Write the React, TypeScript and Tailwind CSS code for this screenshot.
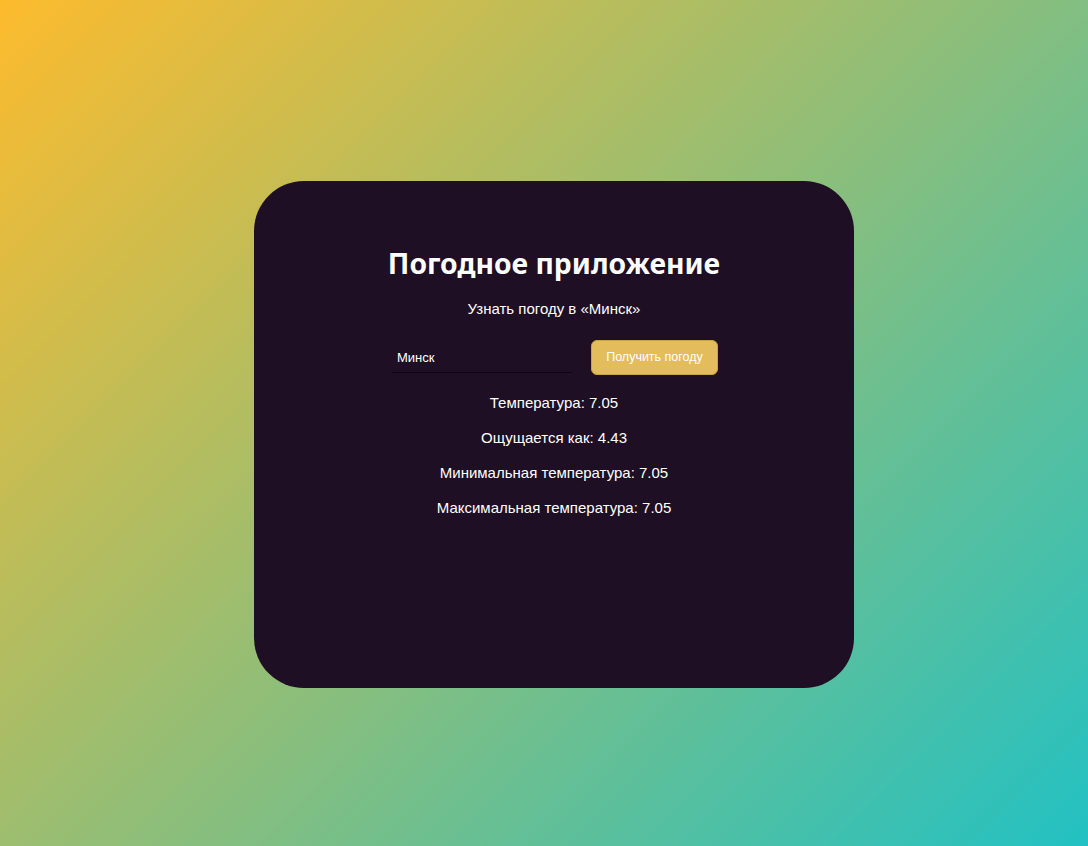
import React, { useState } from 'react';

const results = [
    { label: 'Температура', value: '7.05' },
    { label: 'Ощущается как', value: '4.43' },
    { label: 'Минимальная температура', value: '7.05' },
    { label: 'Максимальная температура', value: '7.05' },
];

export default function App() {
    const [city, setCity] = useState('Минск');

    return (
        <div className="flex min-h-screen w-full items-center justify-center bg-[linear-gradient(135deg,#fdbb2d_0%,#22c1c3_100%)] pl-[20px] pt-[23px] font-['Liberation_Sans',Arial,sans-serif]">
            <div className="flex h-[507px] w-[600px] flex-col items-center rounded-[50px] bg-[#1e0f24] pt-[64px] text-white">
                {/* Header */}
                <h1 className="font-['Noto_Sans',sans-serif] text-[28.3px] font-bold leading-[36px] text-white">
                    Погодное приложение
                </h1>
                <p className="mt-[19px] text-[15px] leading-[18px]">Узнать погоду в «{city}»</p>

                {/* Search */}
                <div className="ml-[2px] mt-[22px] flex items-center gap-[19px]">
                    <input
                        value={city}
                        onChange={(e) => setCity(e.target.value)}
                        className="h-[30px] w-[180px] border-b border-[#0e0512] bg-transparent px-[5px] text-[13px] font-medium text-white outline-none"
                    />
                    <button className="h-[35px] w-[127px] rounded-[6px] border border-[#c9a249] bg-[#e3bc5b] text-[12.5px] text-white">
                        Получить погоду
                    </button>
                </div>

                {/* Results */}
                <div className="mt-[19px] flex flex-col items-center gap-[17px]">
                    {results.map((r) => (
                        <p key={r.label} className="text-[15px] leading-[18px]">
                            {r.label}: {r.value}
                        </p>
                    ))}
                </div>
            </div>
        </div>
    );
}
